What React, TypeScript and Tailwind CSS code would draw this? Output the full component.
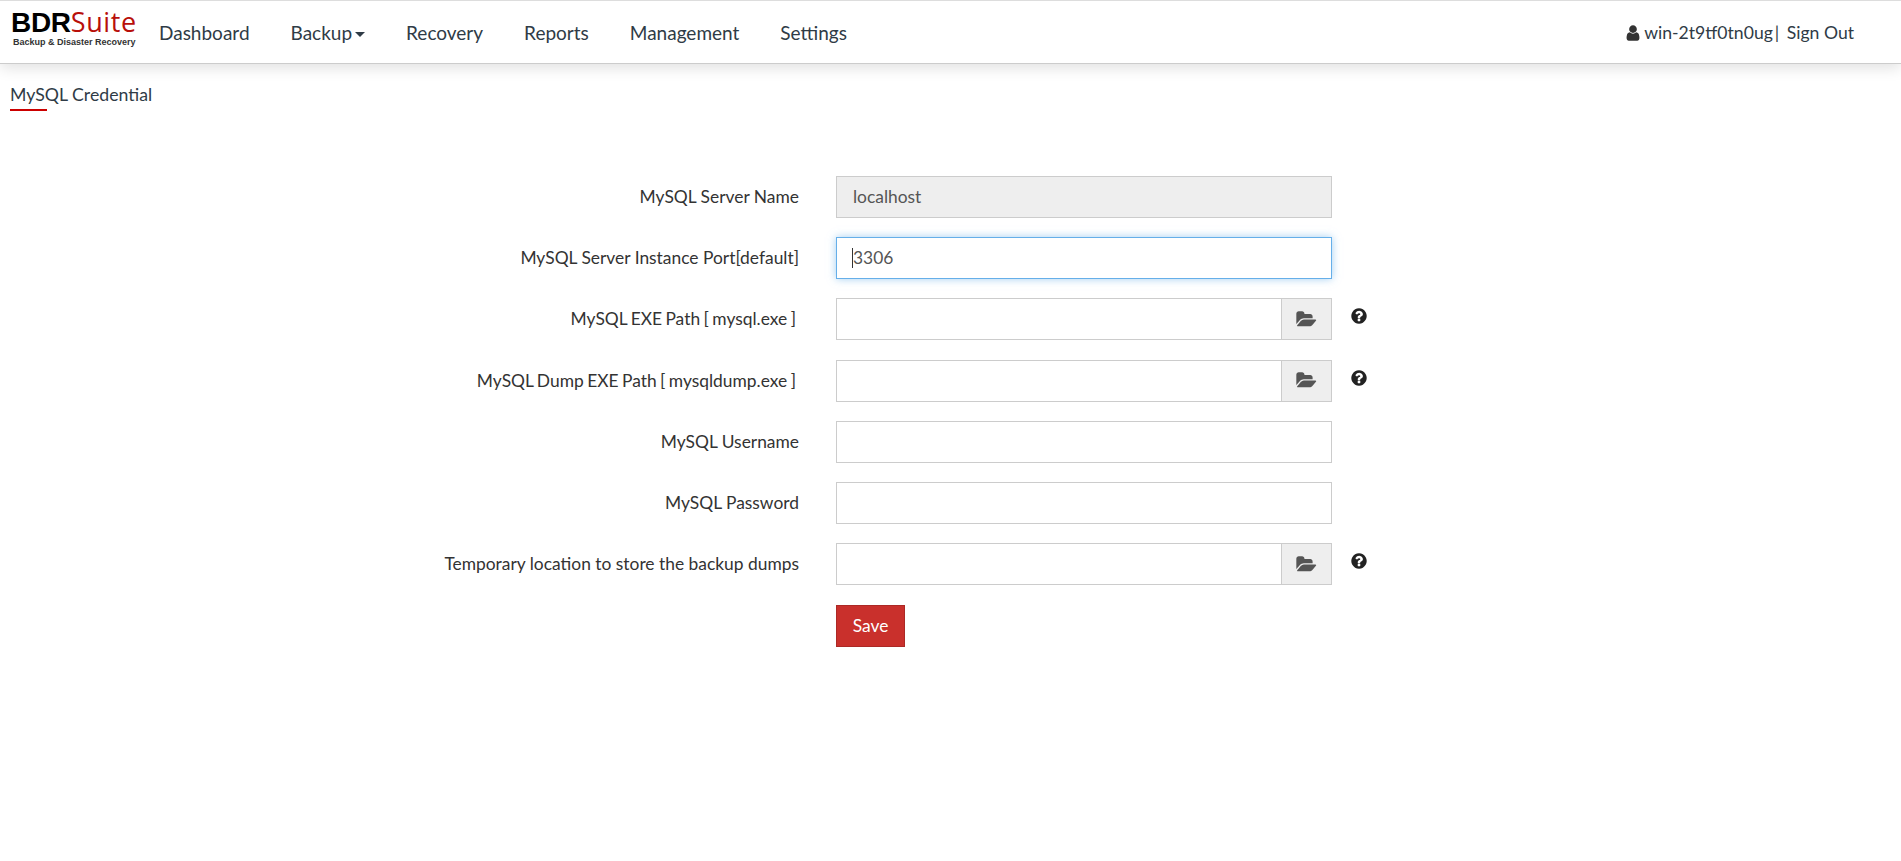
const NAV = ["Dashboard", "Backup", "Recovery", "Reports", "Management", "Settings"];

const inputClass = "h-[42px] w-full border border-[#ccc] px-4 text-[17.4px] text-[#555] outline-none";

function FolderIcon() {
  return (
    <svg viewBox="0 0 1920 1792" className="h-[19px] w-[21px] fill-[#555]">
      <path d="M1879 952q0 31-31 66l-336 396q-43 51-120.500 86.500t-143.500 35.500h-1088q-34 0-60.500-13t-26.500-43q0-31 31-66l336-396q43-51 120.500-86.500t143.500-35.500h1088q34 0 60.500 13t26.500 43zm-343-344v160h-832q-94 0-197 47.500t-164 119.500l-337 396-5 6q0-4-.5-12.500t-.5-12.500v-960q0-92 66-158t158-66h320q92 0 158 66t66 158v32h544q92 0 158 66t66 158z" />
    </svg>
  );
}

function HelpIcon() {
  return (
    <svg viewBox="0 0 1792 1792" className="relative top-[-3px] ml-[18px] h-[18px] w-[18px] fill-[#222]">
      <path d="M1024 1376v-192q0-14-9-23t-23-9h-192q-14 0-23 9t-9 23v192q0 14 9 23t23 9h192q14 0 23-9t9-23zm256-672q0-88-55.500-163t-138.500-116-170-41q-243 0-371 213-15 24 8 42l132 100q7 6 19 6 16 0 25-12 53-68 86-92 34-24 86-24 48 0 85.500 26t37.500 59q0 38-20 61t-68 45q-63 28-115.500 86.500t-52.500 125.500v36q0 14 9 23t23 9h192q14 0 23-9t9-23q0-19 21.500-49.500t54.500-49.500q32-18 49-28.500t46-35 44.500-48 28-60.500 12.500-81zm384 192q0 209-103 385.500t-279.500 279.500-385.500 103-385.500-103-279.500-279.500-103-385.500 103-385.500 279.500-279.500 385.500-103 385.500 103 279.500 279.500 103 385.500z" />
    </svg>
  );
}

function Label({ children, pad }: { children: React.ReactNode; pad?: boolean }) {
  return (
    <label className={`w-[836px] shrink-0 text-right text-[17.4px] text-[#333] ${pad ? "pr-[40px] [word-spacing:-1px]" : "pr-[37px]"}`}>
      {children}
    </label>
  );
}

function PathRow({ label, pad }: { label: string; pad?: boolean }) {
  return (
    <div className="flex h-[42px] items-center">
      <Label pad={pad}>{label}</Label>
      <div className="flex h-[42px] w-[496px] border border-[#ccc]">
        <input className="h-full min-w-0 flex-1 bg-white px-4 text-[17px] outline-none" />
        <span className="flex h-full w-[50px] items-center justify-center border-l border-[#ccc] bg-[#eee]">
          <FolderIcon />
        </span>
      </div>
      <HelpIcon />
    </div>
  );
}

export default function App() {
  return (
    <div className="min-h-[861px] bg-white font-['Lato',sans-serif] text-[#333]">
      <header className="flex h-[64px] items-center border-t border-b border-t-[#ddd] border-b-[#ccc] bg-white pl-[11px] pr-[47px] shadow-[0_4px_14px_rgba(0,0,0,0.12)]">
        <div className="mr-[24px] mb-[10px] flex w-[124px] flex-col leading-none">
          <div className="flex h-[28px] items-baseline text-[28px] leading-[28px]">
            <span className="font-['Liberation_Sans',sans-serif] font-bold tracking-[-0.3px] text-black">BDR</span>
            <span className="font-['Open_Sans',sans-serif] text-[27px] tracking-[0.6px] text-[#b80f0a]">Suite</span>
          </div>
          <div className="mt-[2px] pl-[2px] font-['Liberation_Sans',sans-serif] text-[9px] font-bold whitespace-nowrap text-[#333]">
            Backup &amp; Disaster Recovery
          </div>
        </div>
        <nav className="flex items-center gap-[41px] pt-[2px] text-[19px] text-[#2f3b46]">
          {NAV.map((item) => (
            <a key={item} className="flex items-center">
              {item}
              {item === "Backup" && (
                <span className="ml-[3px] mt-[3px] h-0 w-0 border-x-[5px] border-t-[5px] border-x-transparent border-t-[#2f3b46]" />
              )}
            </a>
          ))}
        </nav>
        <div className="ml-auto flex items-center pt-[2px] text-[17.6px] text-[#2f3b46]">
          <svg viewBox="0 0 1792 1792" className="mr-[2px] h-[18px] w-[18px] fill-[#333]">
            <path d="M1536 1399q0 109-62.500 187t-150.500 78h-854q-88 0-150.500-78t-62.500-187q0-85 8.500-160.500t31.500-152 58.500-131 94-89 134.500-34.500q131 128 313 128t313-128q76 0 134.500 34.500t94 89 58.500 131 31.500 152 8.500 160.500zm-256-887q0 159-112.500 271.500t-271.500 112.500-271.500-112.500-112.500-271.500 112.500-271.500 271.500-112.500 271.500 112.500 112.500 271.500z" />
          </svg>
          <span>win-2t9tf0tn0ug</span>
          <span className="ml-[2px]">|</span>
          <span className="ml-[7.5px]">Sign Out</span>
        </div>
      </header>

      <div className="px-[10px] pt-[19px]">
        <div className="text-[17.7px] leading-[24px] text-[#2f3b46]">MySQL Credential</div>
        <div className="mt-[2px] h-[2px] w-[37px] bg-[#c00]" />
      </div>

      <form className="mt-[64.7px] flex flex-col gap-[19.3px]">
        <div className="flex h-[42px] items-center">
          <Label>MySQL Server Name</Label>
          <div className="w-[496px]">
            <input readOnly value="localhost" className={`${inputClass} bg-[#eee]`} />
          </div>
        </div>
        <div className="flex h-[42px] items-center">
          <Label>MySQL Server Instance Port[default]</Label>
          <div className="relative w-[496px]">
            <input
              readOnly
              value="3306"
              className="h-[42px] w-full border border-[#66afe9] bg-white px-4 text-[17.4px] text-[#555] shadow-[0_0_8px_rgba(102,175,233,0.6)] outline-none"
            />
            <span className="absolute left-[16px] top-[11px] h-[20px] w-px bg-[#333]" />
          </div>
        </div>
        <PathRow label="MySQL EXE Path [ mysql.exe ]" pad />
        <PathRow label="MySQL Dump EXE Path [ mysqldump.exe ]" pad />
        <div className="flex h-[42px] items-center">
          <Label>MySQL Username</Label>
          <div className="w-[496px]">
            <input className={inputClass} />
          </div>
        </div>
        <div className="flex h-[42px] items-center">
          <Label>MySQL Password</Label>
          <div className="w-[496px]">
            <input className={inputClass} />
          </div>
        </div>
        <PathRow label="Temporary location to store the backup dumps" />
        <div className="flex">
          <div className="w-[836px] shrink-0" />
          <button type="button" className="h-[42px] w-[69px] border border-[#ac2925] bg-[#c9302c] text-[17.4px] text-white">
            Save
          </button>
        </div>
      </form>
    </div>
  );
}
